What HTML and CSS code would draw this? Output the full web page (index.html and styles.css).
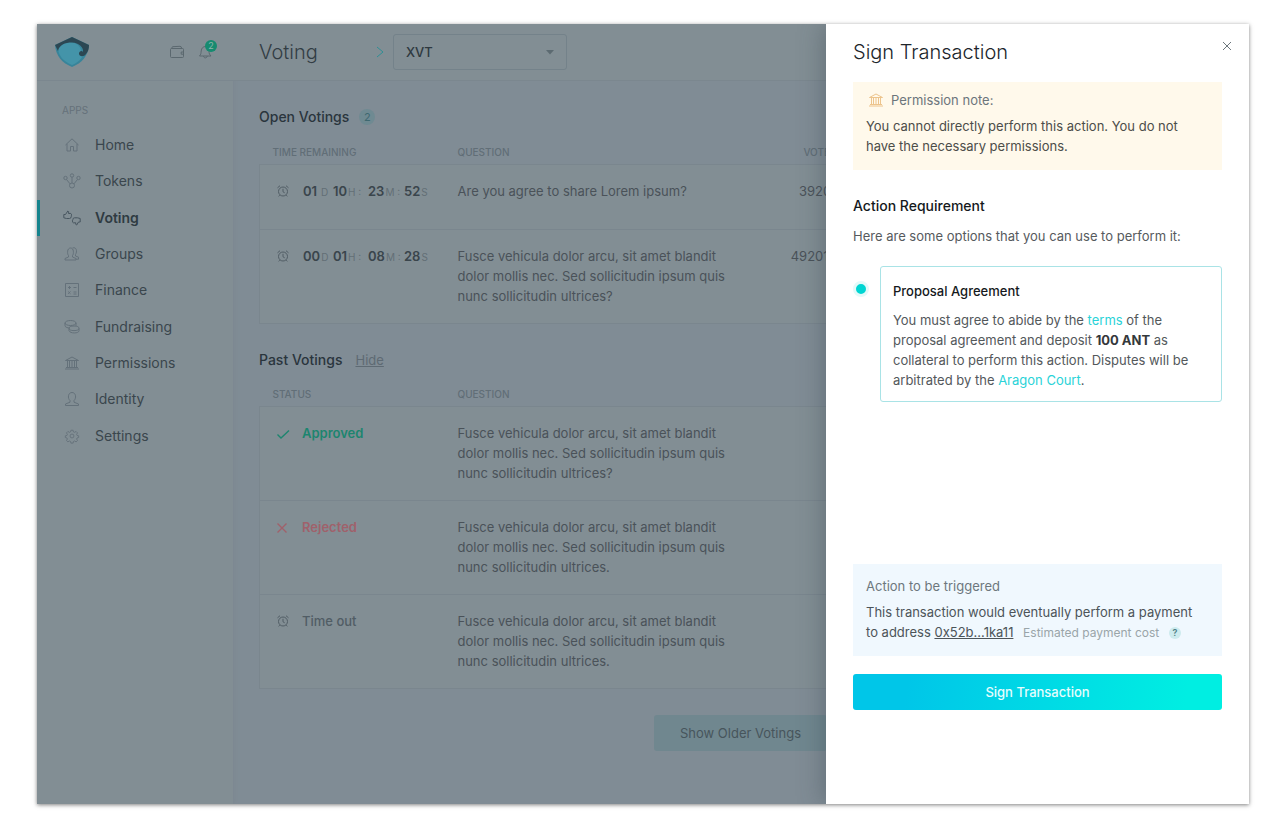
FILE: index.html
```html
<!DOCTYPE html>
<html lang="en">
<head>
<meta charset="utf-8">
<meta name="viewport" content="width=device-width, initial-scale=1">
<title>Voting – Sign Transaction</title>
<link rel="stylesheet" href="styles.css">
</head>
<body>
<svg class="sprite" aria-hidden="true">
  <symbol id="i-bank" viewBox="0 0 16 16"><path d="M1.500 5.500 8 2l6.500 3.500zM3.500 6v6.500M5.500 6v6.500M8 6v6.500M10.500 6v6.500M12.500 6v6.500M1 14h14M2 12.500h12"/></symbol>
  <symbol id="i-clock" viewBox="0 0 14 14"><circle cx="7" cy="7.500" r="4.500"/><path d="M7 4.800v3l1.700 1M1.500 3.800 4 1.700M12.500 3.800 10 1.700M3.700 11.200l-1 1.200M10.300 11.200l1 1.200"/></symbol>
</svg>

<div class="window">
  <aside class="sidebar">
    <div class="brand">
      <svg class="logo" viewBox="0 0 36 32" aria-label="Aragon">
        <path d="M18 1 35 9C34 20 28 27 18 31 8 27 2 20 1 9z" fill="#38849a"/>
        <path d="M4 13C8 6 18 4 24 9c4 4 3 7 2 8 4 1 6-1 5-5 0 7-5 14-13 17C9 25 5 20 4 13z" fill="#4494a9"/>
        <path d="M1 9 18 1l17 8c0 4-1 7-3 9-2 3-7 3-7-.5 0-2.500 3-3.500 4-1.500 1-4-4-9.500-11-9.500C11 6.500 5 9 4 15L1 9z" fill="#2c4753"/>
      </svg>
      <div class="brand-actions">
        <button class="icon-button" type="button" aria-label="Wallet">
          <svg class="icon" viewBox="0 0 16 16"><path d="M1.500 5.500q0-1 1-1h11q1 0 1 1v7q0 1-1 1h-11q-1 0-1-1zM2.500 4.500l1-1.800 7.500-.4q1.500 0 1.700 2.200M14.500 8h-2.300v2.200h2.300"/></svg>
        </button>
        <button class="icon-button" type="button" aria-label="Notifications">
          <svg class="icon" viewBox="0 0 16 16"><path d="M2.500 12c1.500-1.500 1.500-3 1.700-5 .3-3 2-4.500 4.300-4.500S12 4.500 12 7s.5 3.500 2 5zM6.500 12c.2 2.500 3.500 2.500 3.800 0"/></svg>
          <span class="alert-count">2</span>
        </button>
      </div>
    </div>
    <h2 class="nav-title">Apps</h2>
    <nav class="nav">
      <a href="#home"><svg class="icon" viewBox="0 0 16 16"><path d="M1.500 8 8 1.800 14.500 8M3 7v7h3.500V9.500h3V14H13V7"/></svg>Home</a>
      <a href="#tokens"><svg class="icon wide" viewBox="0 0 18 16"><circle cx="9" cy="2.500" r="1.700"/><circle cx="2.500" cy="5" r="1.700"/><circle cx="15.500" cy="5" r="1.700"/><circle cx="9" cy="12.500" r="2.500"/><path d="M9 4.200V10M3.500 6.500 7 10.800M14.500 6.500 11 10.800"/></svg>Tokens</a>
      <a href="#voting" class="active" aria-current="page"><svg class="icon wide" viewBox="0 0 18 16"><path d="M.8 4.500h1.700L4.800 1q1.500.2.700 2.500h2.300q1.200.6.600 1.700.4 1-.3 1.600 0 1.700-1.600 1.700H3.500L.8 7.800zM17.200 12h-1.700l-1.800 3q-1.500-.2-.9-2.200h-2.600q-1.200-.6-.6-1.700-.4-1 .3-1.600 0-1.700 1.600-1.700h3l2.700.7z"/></svg>Voting</a>
      <a href="#groups"><svg class="icon" viewBox="0 0 16 16"><path d="M1 14v-1.500l3.500-1.500v-1.500C3 8 3 2 6.500 2S10 8 8.500 9.500V11l3.500 1.500V14zM8.500 2c4-1.500 5 3.500 3 6.500V10l3 1.200v2H12"/></svg>Groups</a>
      <a href="#finance"><svg class="icon" viewBox="0 0 16 16"><path d="M1.500 1.500h13v13h-13zM4 5.500h3M5.500 4v3M9.500 5.500h3M4.200 9.500l2.300 2.300M6.500 9.500l-2.300 2.300M9.500 10h3M9.500 12h3"/></svg>Finance</a>
      <a href="#fundraising"><svg class="icon" viewBox="0 0 16 16"><ellipse cx="6.500" cy="4" rx="5.500" ry="2.500"/><path d="M1 4v2.500C1 8.500 4 9 6 9M12 4v2.800M5 9.500v2.200c1 3 10 3 10 0V9.500"/><ellipse cx="10" cy="9.300" rx="5" ry="2.300"/></svg>Fundraising</a>
      <a href="#permissions"><svg class="icon"><use href="#i-bank"/></svg>Permissions</a>
      <a href="#identity"><svg class="icon" viewBox="0 0 16 16"><path d="M1.500 14.500V13L6 11.200V9.500C3.500 7.500 3.800 1.500 8 1.500S12.500 7.500 10 9.500v1.700l4.500 1.800v1.500z"/></svg>Identity</a>
      <a href="#settings"><svg class="icon" viewBox="-1 -1 18 18"><circle cx="8" cy="8" r="2.200"/><path d="m6.800 1.500h2.400l.4 1.900 1.300.5 1.700-1 1.600 1.600-1 1.700.5 1.200 1.800.4v1.900l-1.800.5-.5 1.200 1 1.700-1.600 1.500-1.700-1-1.300.6-.4 1.800H6.800l-.4-1.800-1.300-.6-1.700 1-1.600-1.500 1-1.700-.5-1.200-1.800-.5V7.800l1.800-.4.5-1.200-1-1.700 1.600-1.600 1.700 1 1.300-.5z"/></svg>Settings</a>
    </nav>
  </aside>

  <main class="main">
    <header class="topbar">
      <h1>Voting</h1>
      <svg class="crumb" viewBox="0 0 8 12" aria-hidden="true"><path d="m1 1 6 5-6 5"/></svg>
      <div class="select">
        <select aria-label="Token"><option>XVT</option></select>
        <svg class="caret" viewBox="0 0 8 5" aria-hidden="true"><path d="M0 0h8L4 4.500z"/></svg>
      </div>
    </header>
    <div class="content">
      <section>
        <div class="section-head"><h2>Open Votings</h2><span class="count">2</span></div>
        <table>
          <thead><tr><th class="col-first">Time remaining</th><th class="col-question">Question</th><th class="col-votes">Votes</th><th></th></tr></thead>
          <tbody>
            <tr>
              <td><div class="status"><svg class="clock"><use href="#i-clock"/></svg><div class="countdown"><span><b>01</b> D</span><span><b>10</b>H :</span><span><b>23</b>M :</span><span><b>52</b>S</span></div></div></td>
              <td class="single">Are you agree to share Lorem ipsum?</td><td class="votes">39201</td><td></td>
            </tr>
            <tr>
              <td><div class="status"><svg class="clock"><use href="#i-clock"/></svg><div class="countdown"><span><b>00</b>D</span><span><b>01</b>H :</span><span><b>08</b>M :</span><span><b>28</b>S</span></div></div></td>
              <td>Fusce vehicula dolor arcu, sit amet blandit dolor mollis nec. Sed sollicitudin ipsum quis nunc sollicitudin ultrices?</td><td class="votes">492012</td><td></td>
            </tr>
          </tbody>
        </table>
      </section>
      <section>
        <div class="section-head"><h2>Past Votings</h2><a class="hide" href="#hide">Hide</a></div>
        <table>
          <thead><tr><th class="col-first">Status</th><th class="col-question">Question</th><th class="col-votes"></th><th></th></tr></thead>
          <tbody>
            <tr>
              <td><div class="status approved"><svg class="clock" viewBox="0 0 14 14"><path d="m1.500 8.500 3.500 3.500 8-7.500"/></svg>Approved</div></td>
              <td>Fusce vehicula dolor arcu, sit amet blandit dolor mollis nec. Sed sollicitudin ipsum quis nunc sollicitudin ultrices?</td><td></td><td></td>
            </tr>
            <tr>
              <td><div class="status rejected"><svg class="clock" viewBox="0 0 14 14"><path d="m1.500 3.500 9 9M10.500 3.500l-9 9"/></svg>Rejected</div></td>
              <td>Fusce vehicula dolor arcu, sit amet blandit dolor mollis nec. Sed sollicitudin ipsum quis nunc sollicitudin ultrices.</td><td></td><td></td>
            </tr>
            <tr>
              <td><div class="status timeout"><svg class="clock"><use href="#i-clock"/></svg>Time out</div></td>
              <td>Fusce vehicula dolor arcu, sit amet blandit dolor mollis nec. Sed sollicitudin ipsum quis nunc sollicitudin ultrices.</td><td></td><td></td>
            </tr>
          </tbody>
        </table>
      </section>
      <button class="older" type="button">Show Older Votings</button>
    </div>
  </main>

  <div class="panel" role="dialog" aria-labelledby="panel-title">
    <header class="panel-head">
      <h2 id="panel-title">Sign Transaction</h2>
      <button class="close" type="button" aria-label="Close"><svg viewBox="0 0 10 10"><path d="m1 1 8 8M9 1 1 9"/></svg></button>
    </header>
    <div class="note">
      <h3><svg class="icon"><use href="#i-bank"/></svg>Permission note:</h3>
      <p>You cannot directly perform this action. You do not have the necessary permissions.</p>
    </div>
    <h3 class="requirement">Action Requirement</h3>
    <p class="intro">Here are some options that you can use to perform it:</p>
    <div class="option">
      <input type="radio" name="option" id="agreement" checked>
      <div class="card">
        <label for="agreement">Proposal Agreement</label>
        <p>You must agree to abide by the <a href="#terms">terms</a> of the proposal agreement and deposit <b>100 ANT</b> as collateral to perform this action. Disputes will be arbitrated by the <a href="#court">Aragon Court</a>.</p>
      </div>
    </div>
    <div class="trigger">
      <h3>Action to be triggered</h3>
      <p>This transaction would eventually perform a payment to address <a href="#address">0x52b...1ka11</a> <span class="cost">Estimated payment cost</span> <button class="help" type="button" aria-label="About the payment cost">?</button></p>
    </div>
    <button class="submit" type="button">Sign Transaction</button>
  </div>
</div>
</body>
</html>
```

FILE: styles.css
```css
* { box-sizing: border-box; }

body {
  display: grid;
  margin: 0;
  padding: 24px 31px 26px 37px;
  background: #fff;
  color: #4a5259;
  font: 13px/20px Inter, "Liberation Sans", sans-serif;
}

h1, h2, h3, p { margin: 0; font-size: inherit; font-weight: 400; }
button, select { font: inherit; color: inherit; }
button { padding: 0; border: 0; background: none; cursor: pointer; }
a { color: inherit; }
svg { display: block; flex: none; fill: none; stroke: currentColor; }
.sprite { position: absolute; width: 0; height: 0; }
.icon { width: 16px; height: 16px; stroke-width: 1; }

.window {
  position: relative;
  display: flex;
  min-height: calc(100vh - 50px);
  overflow: hidden;
  background: #808c95;
  box-shadow: 0 1px 4px rgba(0, 0, 0, .5);
}

/* Sidebar */
.sidebar {
  flex: none;
  width: 196px;
  background: #828e94;
  box-shadow: 1px 0 4px #7b8790;
}
.brand {
  display: flex;
  align-items: center;
  justify-content: space-between;
  height: 57px;
  padding: 0 20px 0 17px;
  border-bottom: 1px solid #7b878f;
}
.logo { width: 36px; height: 32px; stroke: none; }
.brand-actions { display: flex; gap: 12px; color: #5b686f; }
.icon-button { position: relative; }
.alert-count {
  position: absolute;
  top: -4px;
  right: -4px;
  width: 12px;
  height: 12px;
  border-radius: 50%;
  background: #168b70;
  color: #8fb5ad;
  font-size: 9px;
  line-height: 12px;
}
.nav-title {
  padding: 19px 25px 7px;
  color: #65717a;
  font-size: 10px;
  text-transform: uppercase;
}
.nav { display: grid; grid-auto-rows: 1fr; height: 327px; }
.nav a {
  display: flex;
  align-items: center;
  gap: 15px;
  padding-left: 27px;
  color: #3a464d;
  font-size: 14px;
  text-decoration: none;
}
.nav .icon { color: #64717a; }
.nav .wide { width: 18px; margin: 0 -1px; }
.nav .active { box-shadow: inset 3px 0 #16838d; color: #2f3b42; font-weight: 600; }
.nav .active .icon { color: #485660; }

/* Main area */
.main { flex: 1; min-width: 0; }
.topbar {
  display: flex;
  align-items: center;
  height: 57px;
  padding: 0 26px;
  border-bottom: 1px solid #7b878f;
  background: #828e94;
}
.topbar h1 { width: 117px; color: #323d44; font-size: 20px; font-weight: 300; }
.crumb { width: 8px; height: 12px; margin-right: 9px; color: #2f8f95; }
.select { position: relative; width: 174px; }
.select select {
  width: 100%;
  height: 36px;
  padding: 0 12px;
  border: 1px solid #74828a;
  border-radius: 3px;
  appearance: none;
  background: #828e94;
  color: #2e3940;
  font-weight: 500;
}
.caret { position: absolute; top: 16px; right: 13px; width: 8px; height: 5px; fill: #5c6a71; stroke: none; pointer-events: none; }
.content { display: grid; gap: 26px; padding: 26px 27px 26px 26px; }
.section-head { display: flex; align-items: center; gap: 10px; color: #2a353d; font-size: 14px; }
.section-head h2 { font-weight: 500; }
.count {
  width: 16px;
  border-radius: 50%;
  background: #6f8a92;
  color: #3e6870;
  font-size: 11px;
  line-height: 16px;
  text-align: center;
}
.hide { margin-left: 3px; color: #5e6a73; font-size: 13px; }
table { width: 100%; table-layout: fixed; border-collapse: collapse; }
th {
  height: 37px;
  padding: 13px 0 0 13px;
  color: #616e77;
  font-size: 10px;
  font-weight: 500;
  line-height: 16px;
  text-align: left;
  text-transform: uppercase;
}
.col-first { width: 185px; }
.col-question { width: 300px; }
.col-votes { width: 92px; text-align: right; }
tbody { border: 1px solid #7a868e; background: #828e94; }
tbody tr { border-top: 1px solid #7a868e; }
td { padding: 16px 13px 17px; vertical-align: top; }
td:nth-child(2) { padding-right: 10px; }
.single { padding-bottom: 28px; }
.votes { padding-right: 0; text-align: right; }
.status { display: flex; align-items: center; gap: 12px; padding-left: 3px; color: #515d65; font-weight: 500; }
.clock { width: 14px; height: 14px; }
.countdown { display: grid; grid-template-columns: 30px 35px 36px auto; margin: 0 -10px 0 1px; color: #626f76; font-size: 10px; font-weight: 400; white-space: nowrap; }
.countdown b { margin-right: 1px; color: #3a454c; font-size: 13px; font-weight: 600; }
.approved { color: #1d856f; font-weight: 600; }
.rejected { color: #a0616b; font-weight: 600; }
.rejected .clock, .approved .clock { stroke-width: 1.4; }
.older {
  justify-self: center;
  padding: 8px 26px;
  border-radius: 3px;
  background: #70878f;
  color: #47555c;
}

/* Side panel */
.panel {
  position: absolute;
  top: 0;
  right: 0;
  bottom: 0;
  display: flex;
  flex-direction: column;
  width: 423px;
  max-width: 100%;
  padding: 13px 27px 94px 27px;
  background: #fff;
  box-shadow: -2px 0 24px rgba(50, 65, 75, .4);
}
.panel-head { display: flex; justify-content: space-between; color: #20252a; }
.panel-head h2 { font-size: 20px; font-weight: 300; line-height: 30px; }
.close { align-self: flex-start; width: 10px; height: 18px; margin-right: -10px; color: #6d777d; }
.close svg { width: 10px; height: 10px; }
.note { margin-top: 15px; padding: 8px 13px 14px; background: #fff9eb; color: #4c4d49; }
.note h3 { display: flex; align-items: center; gap: 7px; padding-left: 2px; margin-bottom: 6px; color: #6c757b; }
.note .icon { color: #edc48c; }
.requirement { margin-top: 26px; color: #15191c; font-size: 14px; font-weight: 500; }
.intro { margin-top: 10px; color: #565a5d; }
.option { display: flex; gap: 11px; margin-top: 20px; color: #53585b; }
.option input {
  flex: none;
  width: 16px;
  height: 16px;
  margin: 15px 0 0;
  border: 3px solid #e3faf9;
  border-radius: 50%;
  appearance: none;
  background: #00d5d2;
}
.card { flex: 1; padding: 14px 12px 11px; border: 1px solid #a9e3e6; border-radius: 3px; }
.card label { display: block; margin-bottom: 9px; color: #15191c; font-weight: 500; }
.card a { color: #2ad3d8; text-decoration: none; }
.card b { color: #34383b; font-weight: 700; }
.trigger { margin-top: auto; padding: 12px 20px 13px 13px; background: #f0f8fe; color: #4c5459; }
.trigger h3 { margin-bottom: 6px; color: #6d777d; }
.cost { margin: 0 6px; color: #9aa5a9; font-size: 12px; }
.help {
  width: 12px;
  height: 12px;
  border-radius: 50%;
  background: #cdebee;
  color: #4f8085;
  font-size: 9px;
  font-weight: 600;
  line-height: 12px;
  vertical-align: 1px;
}
.submit {
  flex: none;
  height: 36px;
  margin-top: 18px;
  border-radius: 3px;
  background: linear-gradient(100deg, #00c6e8 15%, #00eee2 90%);
  color: #e6fdfd;
  font-weight: 500;
}
```
